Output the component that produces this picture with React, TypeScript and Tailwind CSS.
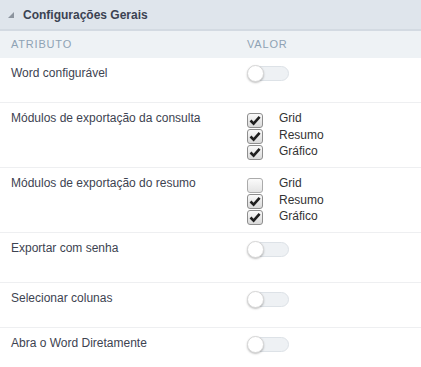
import React from 'react'

type Opt = { label: string; checked: boolean }

const Toggle = () => (
  <div className="relative w-[42px] h-[17px]">
    <div className="absolute left-[2px] right-0 top-[1px] bottom-[1px] rounded-full bg-[#eef1f4] border border-[#dde2e7]" />
    <div className="absolute left-0 top-0 w-[17px] h-[17px] rounded-full bg-white border border-[#d6d6d6] shadow-[0_1px_2px_rgba(0,0,0,0.25)]" />
  </div>
)

const CheckBox = ({ checked }: { checked: boolean }) => (
  <div
    className={
      checked
        ? 'w-[16px] h-[15px] mb-[1px] rounded-[3px] border border-[#8e8e8e] bg-gradient-to-b from-[#fafafa] to-[#d9d9d9] flex items-center justify-center'
        : 'w-[16px] h-[15px] mb-[1px] rounded-[3px] border border-[#ababab] bg-gradient-to-b from-[#fbfbfb] to-[#e4e4e4]'
    }
  >
    {checked && (
      <svg width="12" height="11" viewBox="0 0 12 11">
        <path d="M1.5 5.5 L4.6 8.6 L10.6 1.8" fill="none" stroke="#1f1f1f" strokeWidth="2.6" />
      </svg>
    )}
  </div>
)

const Checks = ({ options }: { options: Opt[] }) => (
  <div className="flex">
    <div className="pt-[10px] flex flex-col">
      {options.map((o) => (
        <CheckBox checked={o.checked} key={o.label} />
      ))}
    </div>
    <div className="ml-[16px] pt-[7px] flex flex-col text-[12px] leading-[16.5px] text-[#333333]">
      {options.map((o) => (
        <span key={o.label}>{o.label}</span>
      ))}
    </div>
  </div>
)

const Row = ({ label, height, last, children }: { label: string; height: string; last?: boolean; children: React.ReactNode }) => (
  <div className={`grid grid-cols-[247px_1fr] ${height} ${last ? '' : 'border-b border-[#eeeff1]'}`}>
    <div className="pl-[11px] pt-[7px] text-[12px] leading-[16px] text-[#3d4351]">{label}</div>
    <div>{children}</div>
  </div>
)

export default function App() {
  return (
    <div className="w-[421px] h-[367px] overflow-hidden bg-white font-['Liberation_Sans',Arial,sans-serif]">
      <div className="h-[31px] bg-[#dfe5ec] border-b-2 border-[#d3dae2] flex items-center">
        <svg className="ml-[8px]" width="6" height="6" viewBox="0 0 6 6">
          <path d="M6 0 L6 6 L0 6 Z" fill="#8c949e" />
        </svg>
        <span className="ml-[9px] text-[12px] font-bold text-[#3b4252]">Configurações Gerais</span>
      </div>
      <div className="h-[27px] bg-[#eef2f5] grid grid-cols-[247px_1fr] items-center text-[11px] tracking-[0.8px] text-[#8ea2b4]">
        <span className="pl-[11px]">ATRIBUTO</span>
        <span>VALOR</span>
      </div>

      <Row height="h-[45px]" label="Word configurável">
        <div className="pt-[7px]">
          <Toggle />
        </div>
      </Row>
      <Row height="h-[65px]" label="Módulos de exportação da consulta">
        <Checks
          options={[
            { label: 'Grid', checked: true },
            { label: 'Resumo', checked: true },
            { label: 'Gráfico', checked: true },
          ]}
        />
      </Row>
      <Row height="h-[65px]" label="Módulos de exportação do resumo">
        <Checks
          options={[
            { label: 'Grid', checked: false },
            { label: 'Resumo', checked: true },
            { label: 'Gráfico', checked: true },
          ]}
        />
      </Row>
      <Row height="h-[50px]" label="Exportar com senha">
        <div className="pt-[8px]">
          <Toggle />
        </div>
      </Row>
      <Row height="h-[45px]" label="Selecionar colunas">
        <div className="pt-[8px]">
          <Toggle />
        </div>
      </Row>
      <Row height="h-[45px]" label="Abra o Word Diretamente" last>
        <div className="pt-[8px]">
          <Toggle />
        </div>
      </Row>
    </div>
  )
}
